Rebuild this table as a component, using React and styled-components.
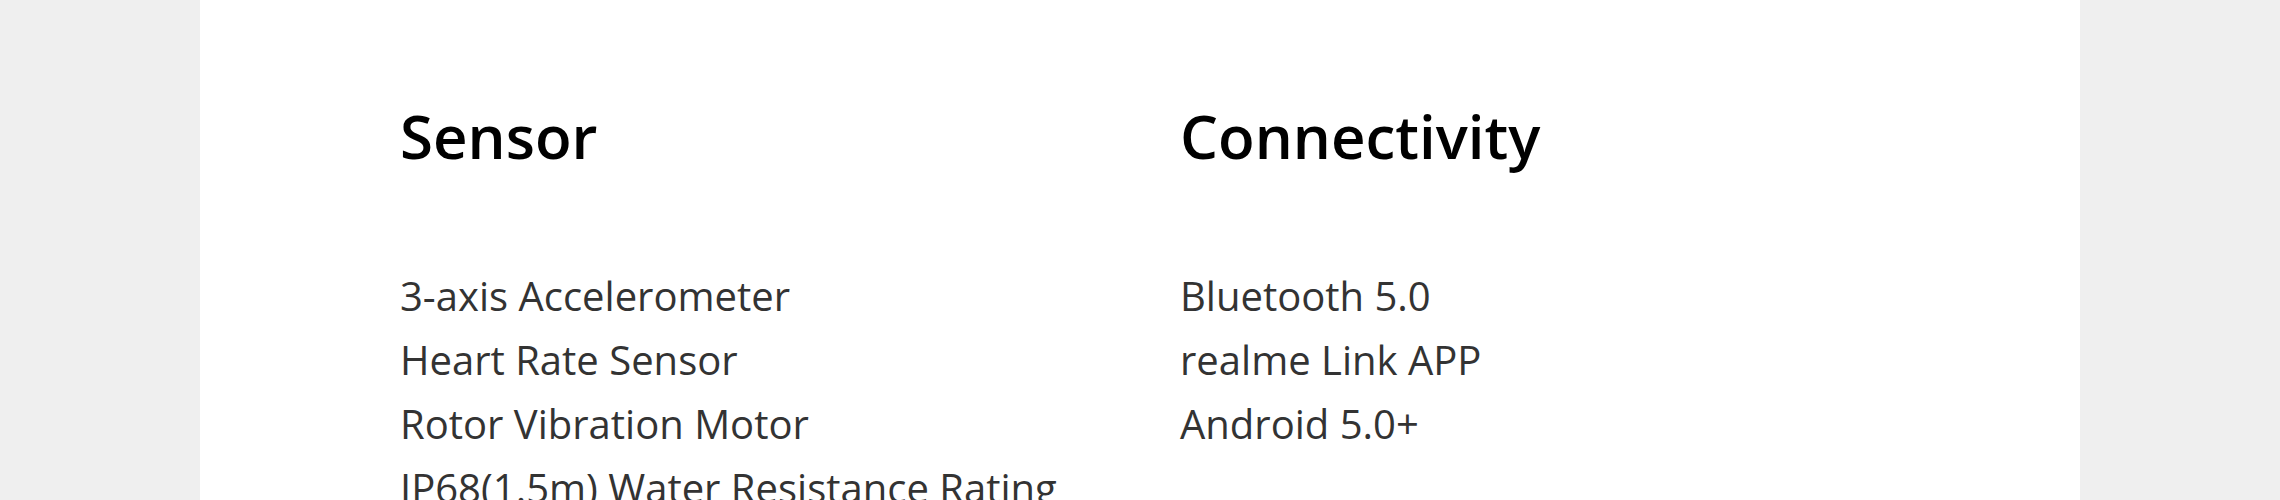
import styled, { createGlobalStyle } from "styled-components";

const specs = [
    {
        title: "Sensor",
        items: [
            "3-axis Accelerometer",
            "Heart Rate Sensor",
            "Rotor Vibration Motor",
            "IP68(1.5m) Water Resistance Rating",
        ],
    },
    {
        title: "Connectivity",
        items: ["Bluetooth 5.0", "realme Link APP", "Android 5.0+"],
    },
];

export default function App() {
    return (
        <>
            <Global />
            <Page>
                <Panel>
                    <Columns>
                        {specs.map((spec) => (
                            <Column key={spec.title}>
                                <Title>{spec.title}</Title>
                                <List>
                                    {spec.items.map((item) => (
                                        <Item key={item}>{item}</Item>
                                    ))}
                                </List>
                            </Column>
                        ))}
                    </Columns>
                </Panel>
            </Page>
        </>
    );
}

const Global = createGlobalStyle`
html, body {
    margin: 0;
    padding: 0;
    background: #efefef;
    font-family: 'Open Sans', 'Noto Sans', sans-serif;
}
`;

const Page = styled.div`
width: 100%;
height: 500px;
overflow: hidden;
background: #efefef;
`;

const Panel = styled.section`
width: 1880px;
height: 100%;
margin: 0 auto;
background: #ffffff;
padding: 100px 200px 0;
box-sizing: border-box;
`;

const Columns = styled.div`
display: grid;
grid-template-columns: 1fr 1fr;
column-gap: 80px;
`;

const Column = styled.div`
display: flex;
flex-direction: column;
`;

const Title = styled.h2`
margin: 0;
font-size: 60px;
line-height: 72px;
font-weight: 600;
color: #000000;
`;

const List = styled.ul`
list-style: none;
margin: 92px 0 0;
padding: 0;
`;

const Item = styled.li`
font-size: 40px;
line-height: 64px;
font-weight: 400;
color: #333333;
white-space: nowrap;
`;
